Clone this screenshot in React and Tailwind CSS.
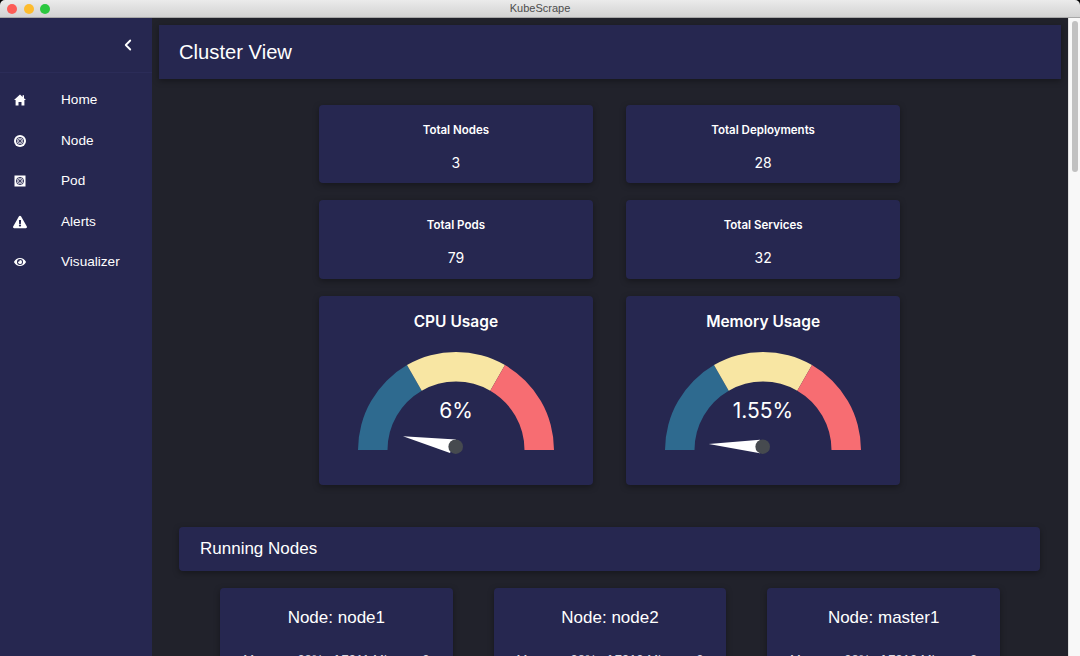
import React from 'react';
import { ChevronLeft } from 'lucide-react';
import { FaExclamationTriangle, FaEye } from 'react-icons/fa';

const helvetica = "font-['Liberation_Sans',Arial,sans-serif]";
const inter = "font-['Inter',sans-serif]";

const HomeIcon = () => (
  <svg width="12" height="12" viewBox="0 0 12 12" fill="#fff">
    <path d="M6 .5L8.6 2.9V1.2H10V4.2L12 6H10.4V11.5H7.5V8H4.5V11.5H1.6V6H0Z" />
  </svg>
);

// kubernetes style wheel, used for node and pod icons
const Wheel = () => (
  <g fill="none" stroke="#262750" strokeWidth="0.9">
    <circle cx="7" cy="7" r="3.6" />
    <path d="M7 3.4V10.6M3.4 7H10.6M4.5 4.5L9.5 9.5M9.5 4.5L4.5 9.5" strokeWidth="0.7" />
  </g>
);

const NodeIcon = () => (
  <svg width="14" height="14" viewBox="0 0 14 14">
    <circle cx="7" cy="7" r="6" fill="#fff" />
    <Wheel />
  </svg>
);

const PodIcon = () => (
  <svg width="14" height="14" viewBox="0 0 14 14">
    <rect x="1.5" y="1.5" width="11" height="11" fill="#fff" />
    <Wheel />
  </svg>
);

const navItems = [
  { label: 'Home', icon: <HomeIcon /> },
  { label: 'Node', icon: <NodeIcon /> },
  { label: 'Pod', icon: <PodIcon /> },
  { label: 'Alerts', icon: <FaExclamationTriangle size={14} /> },
  { label: 'Visualizer', icon: <FaEye size={12} /> },
];

const stats = [
  { title: 'Total Nodes', value: '3' },
  { title: 'Total Deployments', value: '28' },
  { title: 'Total Pods', value: '79' },
  { title: 'Total Services', value: '32' },
];

const nodes = [
  { name: 'node1', mem: '7911' },
  { name: 'node2', mem: '7912' },
  { name: 'master1', mem: '7912' },
];

const cardShadow = 'shadow-[0_2px_6px_rgba(0,0,0,0.35)]';

const Gauge = ({ value, needle }) => (
  <svg width="198" height="110" viewBox="0 0 198 110" className="mt-[17px]">
    <path d="M1 99A98 98 0 0 1 50 14.1L64.75 39.7A68.5 68.5 0 0 0 30.5 99Z" fill="#2e6a8f" />
    <path d="M50 14.1A98 98 0 0 1 148 14.1L133.25 39.7A68.5 68.5 0 0 0 64.75 39.7Z" fill="#f8e6a3" />
    <path d="M148 14.1A98 98 0 0 1 197 99H167.5A68.5 68.5 0 0 0 133.25 39.7Z" fill="#f76d72" />
    <text x="99" y="67" textAnchor="middle" fill="#fff" fontSize="21" fontFamily="Inter, sans-serif">{value}</text>
    <polygon points={needle} fill="#fff" />
    <circle cx="98.7" cy="95.7" r="7.3" fill="#464a4f" />
  </svg>
);

export default function App() {
  return (
    <div className={`h-[656px] w-[1080px] overflow-hidden bg-black flex flex-col ${helvetica}`}>
      {/* title bar */}
      <div className="relative h-[18px] shrink-0 rounded-t-[5px] bg-gradient-to-b from-[#ebebeb] to-[#d3d3d3] border-b border-[#a8a8a8] flex items-center justify-center">
        <div className="absolute left-[7px] top-[4px] flex gap-[6.5px]">
          <span className="w-[10px] h-[10px] rounded-full bg-[#fc5c57]" />
          <span className="w-[10px] h-[10px] rounded-full bg-[#fdbc2e]" />
          <span className="w-[10px] h-[10px] rounded-full bg-[#2bc840]" />
        </div>
        <span className="text-[11px] leading-none text-[#4d4d4d]">KubeScrape</span>
      </div>

      <div className="flex flex-1 min-h-0">
        {/* sidebar */}
        <aside className="w-[152px] shrink-0 bg-[#262750] text-white shadow-[1px_0_4px_rgba(0,0,0,0.3)]">
          <div className="h-[55px] flex items-center justify-end pr-[15px] border-b border-[#2b2c58]">
            <ChevronLeft size={18} strokeWidth={2.4} />
          </div>
          <nav className="pt-[7px]">
            {navItems.map((item) => (
              <div key={item.label} className="h-[40.5px] flex items-center">
                <span className="w-10 flex justify-center">{item.icon}</span>
                <span className="ml-[21px] text-[13.6px]">{item.label}</span>
              </div>
            ))}
          </nav>
        </aside>

        {/* main content */}
        <main className="flex-1 min-w-0 bg-[#21222b] text-white overflow-hidden">
          <div className={`mt-[7px] mx-[7px] h-[54px] bg-[#262750] flex items-center pl-5 ${cardShadow}`}>
            <h1 className="text-[20.2px]">Cluster View</h1>
          </div>

          <div className={`mt-[26px] ml-[167px] w-[581px] grid grid-cols-2 grid-rows-[78px_79px_189px] gap-x-[33.5px] gap-y-[17px] ${inter}`}>
            {stats.map((s) => (
              <div key={s.title} className={`rounded bg-[#262750] text-center pt-[18px] ${cardShadow}`}>
                <div className="text-[11.5px] leading-[14px] font-semibold">{s.title}</div>
                <div className="mt-[16px] text-sm leading-5">{s.value}</div>
              </div>
            ))}
            <div className={`rounded bg-[#262750] flex flex-col items-center pt-[14px] ${cardShadow}`}>
              <div className="text-[15.5px] leading-6 font-semibold">CPU Usage</div>
              <Gauge value="6%" needle="46,85.3 99,88.5 93,102" />
            </div>
            <div className={`rounded bg-[#262750] flex flex-col items-center pt-[14px] ${cardShadow}`}>
              <div className="text-[15.5px] leading-6 font-semibold">Memory Usage</div>
              <Gauge value="1.55%" needle="44.7,93 96,88.7 96,102.3" />
            </div>
          </div>

          <div className={`mt-[42px] ml-[27px] mr-[28px] h-[44px] rounded-sm bg-[#262750] flex items-center pl-[21px] ${cardShadow}`}>
            <h2 className="text-[17px]">Running Nodes</h2>
          </div>

          <div className="mt-[17px] ml-[68px] flex gap-[41px]">
            {nodes.map((n) => (
              <div key={n.name} className={`w-[232.67px] h-[120px] rounded-sm bg-[#262750] text-center pt-[20px] ${cardShadow}`}>
                <div className="text-[17px] leading-5">Node: {n.name}</div>
                <div className="mt-[22px] text-[13px] text-[#d8d8e0]">Memory: 38% of {n.mem} Mi, cpu: 2</div>
              </div>
            ))}
          </div>
        </main>

        {/* scrollbar */}
        <div className="w-3 shrink-0 bg-[#f8f8f8] border-l border-[#e2e2e2] pt-[3px] pl-[2.5px]">
          <div className="w-[6px] h-[151px] rounded-full bg-[#c1c1c1]" />
        </div>
      </div>
    </div>
  );
}
